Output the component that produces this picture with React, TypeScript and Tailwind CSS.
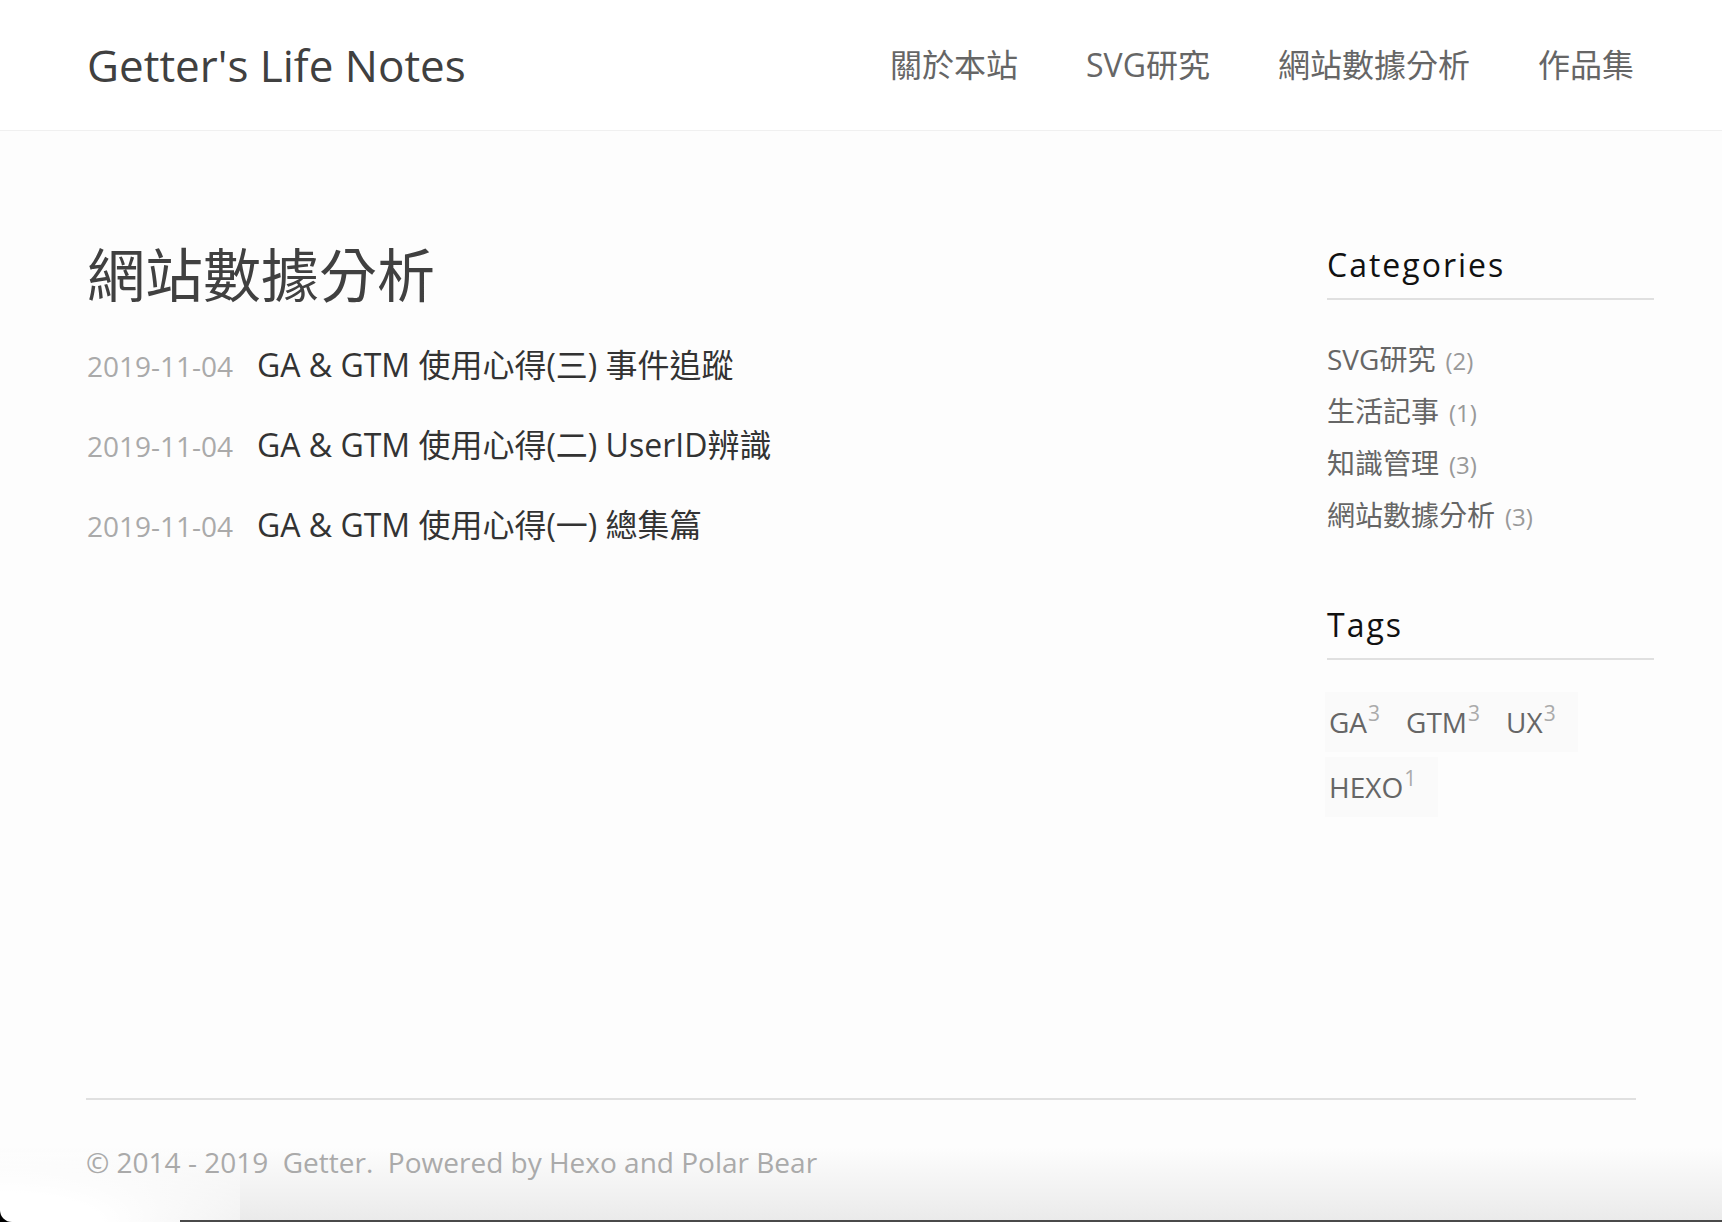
import React from "react";

const posts = [
  "GA & GTM 使用心得(三) 事件追蹤",
  "GA & GTM 使用心得(二) UserID辨識",
  "GA & GTM 使用心得(一) 總集篇",
];

const categories: [string, number][] = [
  ["SVG研究", 2],
  ["生活記事", 1],
  ["知識管理", 3],
  ["網站數據分析", 3],
];

const tags: [string, number][] = [
  ["GA", 3],
  ["GTM", 3],
  ["UX", 3],
  ["HEXO", 1],
];

export default function App() {
  return (
    <div className="relative h-[1222px] overflow-hidden bg-[#fdfdfd] flex flex-col font-['Open_Sans','Noto_Sans_CJK_TC',sans-serif]">
      <div className="pointer-events-none absolute inset-x-0 bottom-0 h-[75px] bg-gradient-to-b from-transparent to-[#eaeaea]" />
      <div className="pointer-events-none absolute bottom-0 left-0 w-[240px] h-[70px] bg-[radial-gradient(ellipse_at_0%_100%,#ffffff_0%,#ffffff_30%,transparent_100%)]" />

      <header className="h-[131px] shrink-0 bg-white border-b border-[#f0f0f0] flex items-center justify-between pl-[87px] pr-[88px]">
        <div className="text-[44px] leading-[56px] text-[#404040]">Getter's Life Notes</div>
        <nav className="flex items-center gap-[68px] text-[32px] leading-[44px] text-[#666]">
          <a>關於本站</a>
          <a>SVG研究</a>
          <a>網站數據分析</a>
          <a>作品集</a>
        </nav>
      </header>

      <main className="flex-1 flex pl-[87px] pt-[110px]">
        <section className="flex-1">
          <h1 className="text-[58px] leading-[68px] text-[#404040]">網站數據分析</h1>
          <ul className="mt-[36px] flex flex-col gap-[40px]">
            {posts.map((p) => (
              <li key={p} className="flex items-baseline h-[40px] leading-[40px]">
                <span className="text-[28px] text-[#aaa] w-[170px] shrink-0">2019-11-04</span>
                <span className="text-[32px] text-[#333]">{p}</span>
              </li>
            ))}
          </ul>
        </section>

        <aside className="w-[327px] mr-[68px] pt-[4px]">
          <h2 className="text-[32px] leading-[40px] tracking-[2px] text-[#111] pb-[13px] border-b-2 border-[#e0e0e0]">
            Categories
          </h2>
          <ul className="pt-[33px]">
            {categories.map(([c, n]) => (
              <li key={c} className="h-[52px] leading-[52px] text-[28px] text-[#666] flex items-baseline">
                <span>{c}</span>
                <span className="ml-[10px] text-[24px] text-[#999]">({n})</span>
              </li>
            ))}
          </ul>

          <h2 className="mt-[64px] text-[32px] leading-[40px] tracking-[2px] text-[#111] pb-[13px] border-b-2 border-[#e0e0e0]">
            Tags
          </h2>
          <ul className="pt-[32px] -ml-[2px] flex flex-wrap">
            {tags.map(([t, n]) => (
              <li key={t} className="mb-[5px] py-[10px] pl-[4px] pr-[22px] bg-[#fafafa] leading-[40px] text-[28px] text-[#666]">
                {t}
                <span className="relative -top-[12px] ml-[1px] text-[21px] leading-none text-[#aaa] align-baseline">{n}</span>
              </li>
            ))}
          </ul>
        </aside>
      </main>

      <footer className="relative z-10 shrink-0 mx-[86px] border-t-2 border-[#e0e0e0] pt-[42px] pb-[40px]">
        <p className="text-[28px] leading-[40px] text-[#aaa] whitespace-pre">
          © 2014 - 2019  Getter.  Powered by Hexo and Polar Bear
        </p>
      </footer>

      <div className="pointer-events-none absolute bottom-0 left-[180px] right-0 h-[2px] bg-[#4a4a4a]" />
      <div className="pointer-events-none absolute bottom-0 left-0 w-[12px] h-[12px] bg-black">
        <div className="w-full h-full bg-white rounded-bl-[12px]" />
      </div>
    </div>
  );
}
